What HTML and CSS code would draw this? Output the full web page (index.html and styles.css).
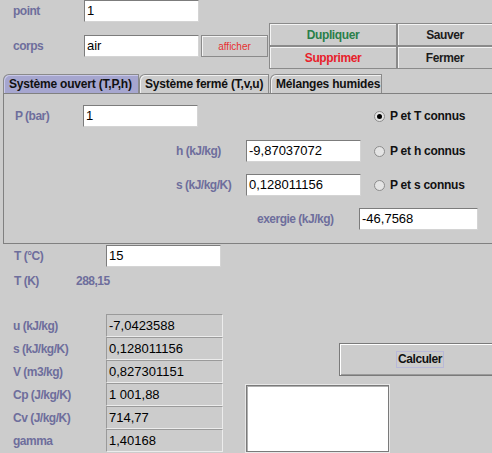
FILE: index.html
```html
<!DOCTYPE html>
<html lang="fr">
<head>
<meta charset="utf-8">
<title>Point</title>
<link rel="stylesheet" href="styles.css">
</head>
<body>
<div class="app">
  <div class="top">
    <div class="top-left">
      <div class="row">
        <span class="lbl lbl-top">point</span>
        <div class="field">1</div>
      </div>
      <div class="row row2">
        <span class="lbl lbl-top">corps</span>
        <div class="field">air</div>
        <div class="btn btn-show">afficher</div>
      </div>
    </div>
    <div class="top-right">
      <div class="btn btn-big green">Dupliquer</div>
      <div class="btn btn-big">Sauver</div>
      <div class="btn btn-big red">Supprimer</div>
      <div class="btn btn-big">Fermer</div>
    </div>
  </div>

  <div class="tabs">
    <div class="tab tab1 active">Système ouvert (T,P,h)</div>
    <div class="tab tab2">Système fermé (T,v,u)</div>
    <div class="tab tab3">Mélanges humides</div>
  </div>

  <div class="panel">
    <div class="prow prow-p">
      <span class="lbl lbl-p">P (bar)</span>
      <div class="field">1</div>
      <div class="radio radio-p"><span class="dot on"></span>P et T connus</div>
    </div>
    <div class="prow prow-h">
      <span class="lbl lbl-h">h (kJ/kg)</span>
      <div class="field">-9,87037072</div>
      <div class="radio"><span class="dot"></span>P et h connus</div>
    </div>
    <div class="prow prow-s">
      <span class="lbl lbl-h">s (kJ/kg/K)</span>
      <div class="field">0,128011156</div>
      <div class="radio"><span class="dot"></span>P et s connus</div>
    </div>
    <div class="prow prow-e">
      <span class="lbl lbl-e">exergie (kJ/kg)</span>
      <div class="field field-e">-46,7568</div>
    </div>
  </div>

  <div class="trow">
    <span class="lbl lbl-t">T (°C)</span>
    <div class="field">15</div>
  </div>
  <div class="tkrow">
    <span class="lbl lbl-tk">T (K)</span>
    <span class="lbl">288,15</span>
  </div>

  <div class="bottom">
    <div class="results">
      <div class="rrow"><span class="lbl lbl-r">u (kJ/kg)</span><div class="rfield">-7,0423588</div></div>
      <div class="rrow"><span class="lbl lbl-r">s (kJ/kg/K)</span><div class="rfield">0,128011156</div></div>
      <div class="rrow"><span class="lbl lbl-r">V (m3/kg)</span><div class="rfield">0,827301151</div></div>
      <div class="rrow"><span class="lbl lbl-r">Cp (J/kg/K)</span><div class="rfield">1 001,88</div></div>
      <div class="rrow"><span class="lbl lbl-r">Cv (J/kg/K)</span><div class="rfield">714,77</div></div>
      <div class="rrow"><span class="lbl lbl-r">gamma</span><div class="rfield">1,40168</div></div>
    </div>
    <div class="side">
      <div class="btn btn-calc"><span class="focus">Calculer</span></div>
      <div class="textbox"></div>
    </div>
  </div>
</div>
</body>
</html>
```

FILE: styles.css
```css
html, body {
  margin: 0;
  padding: 0;
}
body {
  background: #cccccc;
  width: 492px;
  height: 453px;
  overflow: hidden;
  font-family: "Liberation Sans", Arial, sans-serif;
  font-size: 12px;
  color: #000;
}
.app {
  width: 492px;
  height: 453px;
  overflow: hidden;
}
.lbl {
  font-weight: bold;
  color: #6e6e9c;
  font-size: 12px;
  letter-spacing: -0.5px;
  white-space: nowrap;
}
.field {
  box-sizing: border-box;
  width: 115px;
  height: 22px;
  background: #fff;
  border: 1px solid;
  border-color: #7c7c7c #d4d4d4 #d4d4d4 #7c7c7c;
  font-size: 13px;
  line-height: 20px;
  padding-left: 2px;
  white-space: nowrap;
}
.btn {
  box-sizing: border-box;
  border: 1px solid #8a8a8a;
  box-shadow: inset 1px 1px 0 #f4f4f4;
  background: #cccccc;
  display: flex;
  align-items: center;
  justify-content: center;
  font-weight: bold;
  font-size: 12px;
  letter-spacing: -0.4px;
  white-space: nowrap;
}

/* top area */
.top {
  display: flex;
  height: 69px;
}
.top-left {
  width: 269px;
}
.row {
  display: flex;
  align-items: center;
  height: 22px;
}
.row2 {
  margin-top: 13px;
}
.lbl-top {
  box-sizing: border-box;
  width: 84px;
  padding-left: 13px;
}
.btn-show {
  width: 67px;
  height: 22px;
  margin-left: 2px;
  color: #e63030;
  font-weight: normal;
  font-size: 10px;
  letter-spacing: 0;
}
.top-right {
  margin-top: 23px;
  width: 223px;
  display: grid;
  grid-template-columns: 128px 96px;
  grid-auto-rows: 23px;
}
.btn-big {
  height: 23px;
  color: #1c1c1c;
}
.green { color: #2a7f4a; }
.red { color: #e8202a; }

/* tabs */
.tabs {
  display: flex;
  align-items: flex-end;
  height: 19px;
  margin-top: 5px;
  padding-left: 3px;
}
.tab {
  box-sizing: border-box;
  height: 19px;
  border: 1px solid #8a8a8a;
  border-bottom: none;
  border-top-left-radius: 6px;
  box-shadow: inset 1px 1px 0 #f0f0f0;
  font-weight: bold;
  font-size: 12px;
  letter-spacing: -0.2px;
  line-height: 18px;
  padding-left: 5px;
  white-space: nowrap;
  color: #111;
}
.tab1 { width: 136px; }
.tab2 { width: 130px; }
.tab3 { width: 112px; margin-left: 1px; }
.active {
  background: #a6a6cf;
  box-shadow: inset 1px 1px 0 #c8c8e8;
}

/* panel */
.panel {
  box-sizing: border-box;
  margin-left: 3px;
  width: 500px;
  height: 151px;
  border: 1px solid #808080;
  padding-top: 11px;
}
.prow {
  display: flex;
  align-items: center;
  height: 22px;
}
.prow-h { margin-top: 13px; }
.prow-s { margin-top: 12px; }
.prow-e { margin-top: 12px; }
.lbl-p {
  box-sizing: border-box;
  width: 79px;
  padding-left: 11px;
}
.lbl-h {
  box-sizing: border-box;
  width: 242px;
  padding-left: 172px;
}
.lbl-e {
  box-sizing: border-box;
  width: 355px;
  padding-left: 253px;
}
.field-e {
  width: 119px;
}
.radio {
  display: flex;
  align-items: center;
  font-weight: bold;
  font-size: 12px;
  letter-spacing: -0.25px;
  margin-left: 13px;
  white-space: nowrap;
  color: #111;
}
.radio-p {
  margin-left: 176px;
}
.dot {
  box-sizing: border-box;
  width: 11px;
  height: 11px;
  border-radius: 50%;
  border: 1px solid #8c8c8c;
  background: #e4e4e4;
  margin-right: 5px;
  display: flex;
  align-items: center;
  justify-content: center;
}
.dot.on::after {
  content: "";
  width: 5px;
  height: 5px;
  border-radius: 50%;
  background: #000;
}

/* T rows */
.trow {
  display: flex;
  align-items: center;
  height: 22px;
  margin-top: 1px;
}
.lbl-t {
  box-sizing: border-box;
  width: 106px;
  padding-left: 14px;
}
.tkrow {
  display: flex;
  align-items: center;
  height: 14px;
  margin-top: 7px;
}
.lbl-tk {
  box-sizing: border-box;
  width: 76px;
  padding-left: 14px;
}

/* bottom */
.bottom {
  display: flex;
  margin-top: 26px;
}
.results {
  width: 246px;
}
.rrow {
  display: flex;
  align-items: center;
  height: 23px;
}
.lbl-r {
  box-sizing: border-box;
  width: 106px;
  padding-left: 13px;
}
.rfield {
  box-sizing: border-box;
  width: 117px;
  height: 23px;
  border: 1px solid;
  border-color: #9a9a9a #ececec #ececec #9a9a9a;
  font-size: 13px;
  line-height: 21px;
  padding-left: 2px;
  white-space: nowrap;
}
.side {
  width: 246px;
  flex: none;
}
.btn-calc {
  margin-top: 29px;
  margin-left: 93px;
  width: 162px;
  height: 33px;
  border: 1px solid #7a7a7a;
  box-shadow: inset 1px 1px 0 #ffffff, inset -1px -1px 0 #9a9a9a;
  color: #111;
}
.focus {
  border: 1px solid #b8b8d8;
  padding: 0 1px;
  line-height: 15px;
}
.textbox {
  box-sizing: border-box;
  margin-top: 9px;
  width: 143px;
  height: 67px;
  background: #fff;
  border: 1px solid #7a7a7a;
  box-shadow: 0 0 0 1px #e8e8e8, inset 1px 1px 0 #b0b0b0;
}
```
